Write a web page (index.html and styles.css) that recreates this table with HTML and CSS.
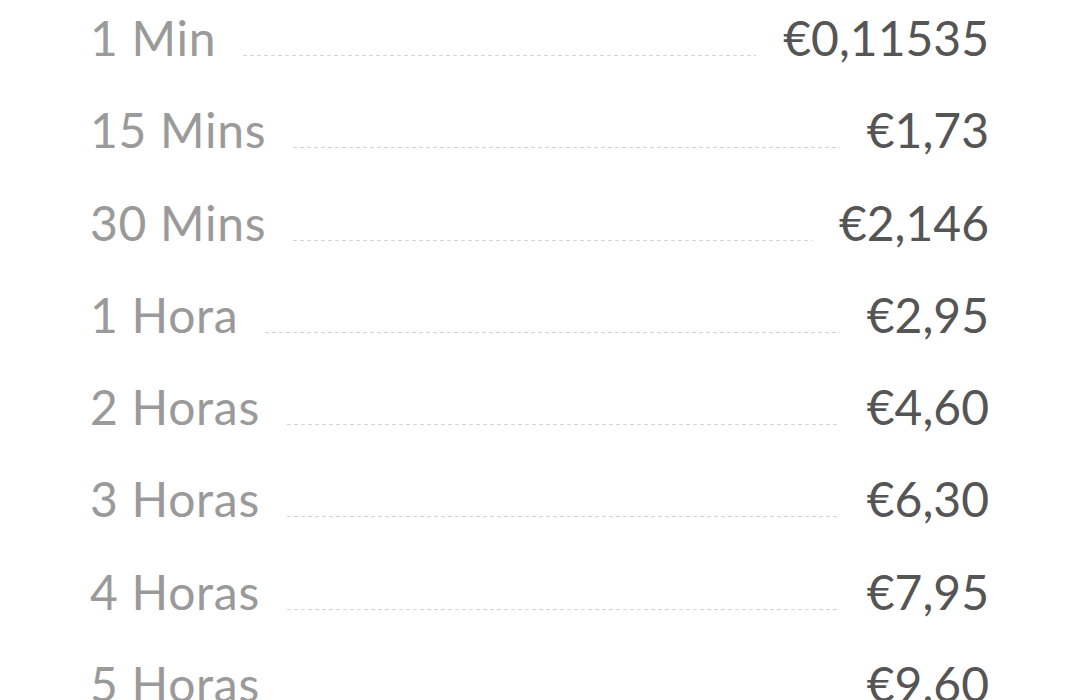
FILE: index.html
```html
<!doctype html>
<html>
<head>
<meta charset="utf-8">
<title>Tarifas</title>
<link rel="stylesheet" href="styles.css">
</head>
<body>
<ul class="rates">
	<li class="rate"><span class="time">1 Min</span><i class="dots"></i><span class="price">€0,11535</span></li>
	<li class="rate"><span class="time">15 Mins</span><i class="dots"></i><span class="price">€1,73</span></li>
	<li class="rate"><span class="time">30 Mins</span><i class="dots"></i><span class="price">€2,146</span></li>
	<li class="rate"><span class="time">1 Hora</span><i class="dots"></i><span class="price">€2,95</span></li>
	<li class="rate"><span class="time">2 Horas</span><i class="dots"></i><span class="price">€4,60</span></li>
	<li class="rate"><span class="time">3 Horas</span><i class="dots"></i><span class="price">€6,30</span></li>
	<li class="rate"><span class="time">4 Horas</span><i class="dots"></i><span class="price">€7,95</span></li>
	<li class="rate"><span class="time">5 Horas</span><i class="dots"></i><span class="price">€9,60</span></li>
</ul>
</body>
</html>
```
FILE: styles.css
```css
*{margin:0;padding:0}
html,body{background:#fff;}
body{font-family:Lato,"Open Sans","Liberation Sans",sans-serif;}

.rates{list-style:none; padding:0 90px; margin-top:-8px;}
.rate{display:flex; align-items:baseline; height:92.3px; line-height:92px; font-size:48px;}
.rate .time{color:#9a9a9a; letter-spacing:0.7px;}
.rate .price{color:#555;}
.rate .dots{flex:1; height:1px; margin:0 27px 1px; background:repeating-linear-gradient(to right,#d4d4d4 0,#d4d4d4 4px,transparent 4px,transparent 7px);}
```
